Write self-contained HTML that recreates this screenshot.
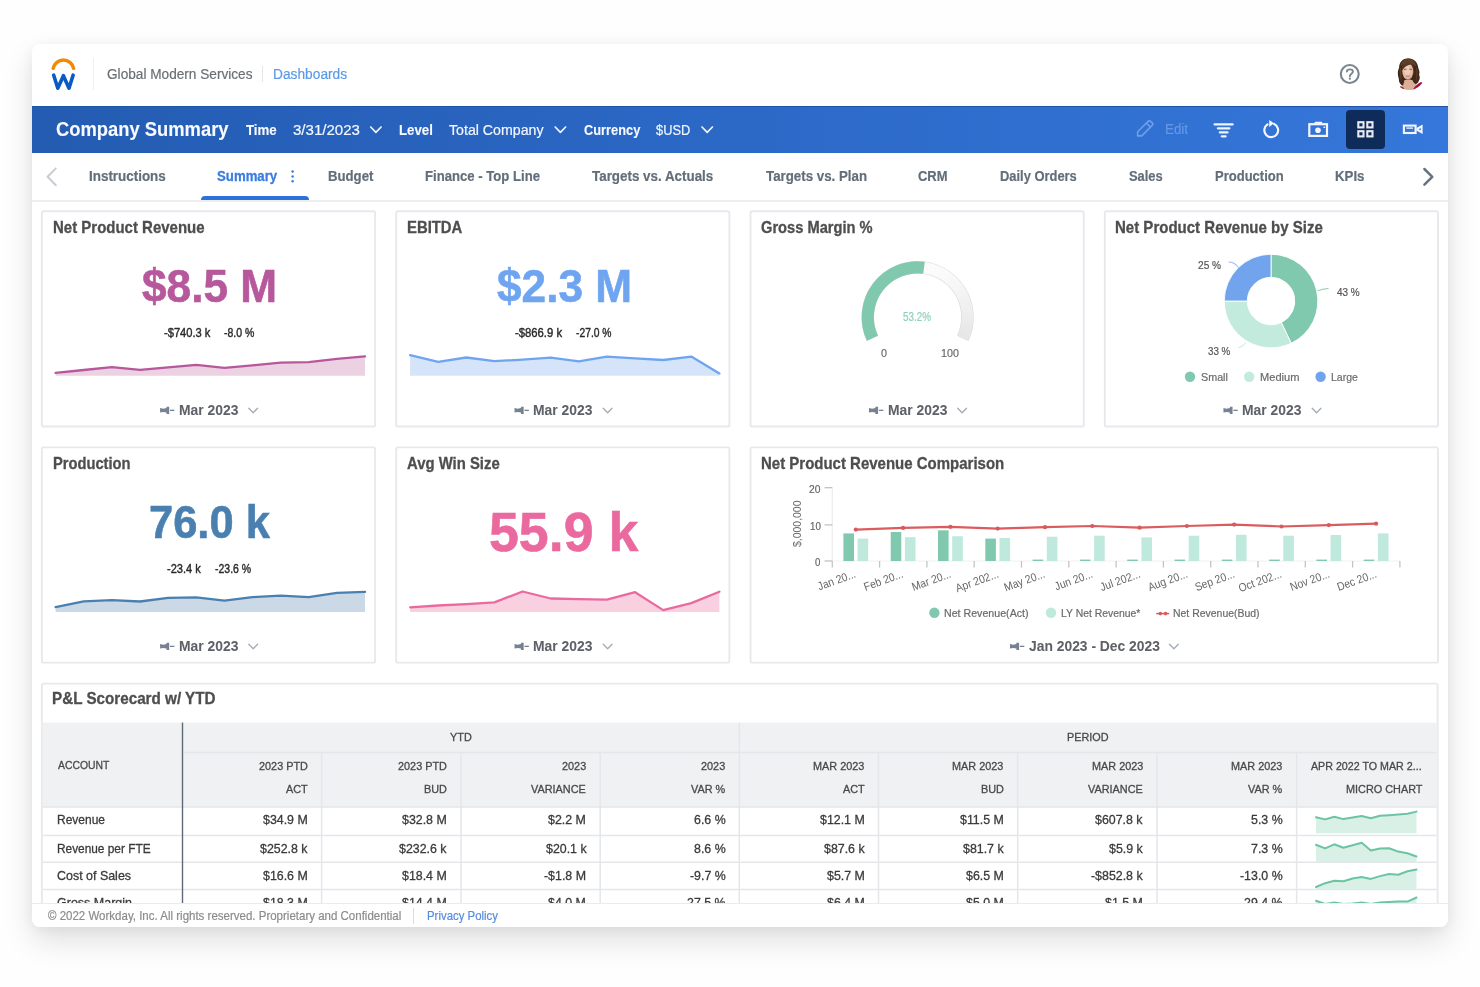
<!DOCTYPE html>
<html><head><meta charset="utf-8"><title>Company Summary</title>
<style>
html,body{margin:0;padding:0;}
body{width:1480px;height:987px;background:#fefefe;position:relative;overflow:hidden;font-family:"Liberation Sans",sans-serif;}
#frame{position:absolute;left:32px;top:44px;width:1416px;height:883px;background:#fff;border-radius:8px;box-shadow:0 14px 30px rgba(0,0,0,0.12),0 2px 13px rgba(0,0,0,0.05);overflow:hidden;}
#pg{position:absolute;left:-32px;top:-44px;width:1480px;height:987px;filter:blur(0.6px);}
.t{position:absolute;white-space:nowrap;line-height:1;transform-origin:0 0;display:block;}
.b{position:absolute;box-sizing:border-box;}
svg{position:absolute;left:0;top:0;}
</style></head>
<body>
<div id="frame"><div id="pg">
<div class="b" style="left:93px;top:58px;width:1px;height:32px;background:#eef0f2;"></div>
<div class="b" style="left:262px;top:66px;width:1px;height:16px;background:#e4e6ea;"></div>
<div class="b" style="left:1392.5px;top:57.9px;width:32.2px;height:32.2px;border-radius:50%;overflow:hidden;"><svg width="32.2" height="32.2" viewBox="1392.5 57.9 32.2 32.2" style="position:absolute;left:0;top:0;">
<path d="M1407.4 58.2 C1402.4 58.2 1398.6 62.4 1398.6 67.4 C1398 69.4 1397 71.4 1397.4 73.6 C1397.2 76 1398.4 77.6 1398.4 79.4 C1398.2 81.6 1399.4 83.6 1400.8 84.8 L1403.2 86.4 L1413.4 84.6 C1416.4 84.4 1418 82.6 1418.4 80.4 C1419.6 78.6 1419.4 76.4 1418.6 74.6 C1419.6 72 1418.4 70 1417.8 68 C1417.4 62.6 1413.6 58.2 1407.4 58.2 Z" fill="#3f2818"/>
<path d="M1407.6 58.6 C1403.4 58.8 1400.4 62 1400 66.4 C1402.6 62.6 1411 61.4 1416 66.6 C1415.4 62 1412.4 58.6 1407.6 58.6 Z" fill="#5f4027"/>
<path d="M1399.4 68 C1398.6 72 1399.6 78 1400.8 82 C1401.2 78 1400.6 72 1400.8 68 Z" fill="#5c3d25"/>
<path d="M1416.6 68 C1417.6 72 1417.2 78 1415.6 82 C1415.6 78 1416.2 72 1415.4 68 Z" fill="#5c3d25"/>
<path d="M1403.8 80.2 C1405.6 79 1410.4 79 1412 80.2 C1413 83 1415 84.6 1418.4 85.4 L1421 90.5 L1399.6 92 L1400.6 87.4 C1402.4 86 1403.6 83.4 1403.8 80.2 Z" fill="#dcae97"/>
<path d="M1411.8 90.6 C1413.4 87 1416 84.4 1420.4 81.8 L1425 84 L1421 93 Z" fill="#a3134b"/>
<path d="M1400.2 86 L1403.6 87.9 L1402.6 90.6 L1398 89.4 Z" fill="#a3134b"/>
<ellipse cx="1407.3" cy="71.2" rx="5.6" ry="8.3" fill="#d9ab95"/>
<ellipse cx="1407.1" cy="70.8" rx="4.7" ry="7.3" fill="#e6bca7"/>
<ellipse cx="1406.8" cy="70.2" rx="3" ry="4.6" fill="#efccba"/>
<path d="M1401.4 68.6 C1401.4 63.4 1406.6 60.6 1412.6 64.4 C1409.4 64.2 1404.4 65.2 1402.2 70.2 Z" fill="#583a24"/>
<path d="M1412.2 64 C1413.6 66 1413.8 69 1413.2 72 C1412.6 69 1412.4 66 1411 64.4 Z" fill="#583a24"/>
<path d="M1403.6 69.3 L1406 69.1 M1408.8 69.1 L1411.2 69.3" stroke="#6b4a3c" stroke-width="0.9" fill="none"/>
<path d="M1405.4 75.6 C1406.6 76.3 1408.2 76.3 1409.4 75.6" stroke="#c47f82" stroke-width="1.1" fill="none"/>
</svg></div>
<div class="b" style="left:32px;top:106px;width:1416px;height:47px;background:linear-gradient(90deg,#245cb2 0%,#2964c0 35%,#2f6dcd 65%,#3577da 100%);border-top:1px solid #1f54a8;"></div>
<div class="b" style="left:1346px;top:110px;width:39px;height:39px;background:#0f2b59;border-radius:4px;"></div>
<div class="b" style="left:32px;top:200px;width:1416px;height:2px;background:#eceef1;"></div>
<div class="b" style="left:200.5px;top:196px;width:108.3px;height:4.2px;background:#2e70d9;border-radius:4px 4px 0 0;"></div>
<svg width="1480" height="987" viewBox="0 0 1480 987">
<path d="M53.2 68.3 A10.45 10.45 0 0 1 73.6 68.3" fill="none" stroke="#f38b00" stroke-width="3.5" stroke-linecap="round"/>
<path d="M53.7 75.2 L57.8 88.2 L63.4 75.7 L69 88.2 L73.1 75.2" fill="none" stroke="#0a5ac6" stroke-width="3.6" stroke-linecap="round" stroke-linejoin="round"/>
<circle cx="1349.75" cy="74" r="8.95" fill="none" stroke="#7b8591" stroke-width="2.1"/>
<path d="M1346.9 71.6 C1346.9 68.6 1352.9 68.6 1352.9 71.6 C1352.9 73.8 1349.9 73.9 1349.9 76.3" fill="none" stroke="#7b8591" stroke-width="1.9" stroke-linecap="round"/>
<circle cx="1349.9" cy="78.7" r="1.15" fill="#7b8591"/>
<path d="M370.7 127 L375.9 132.4 L381.09999999999997 127" fill="none" stroke="#eef3fc" stroke-width="1.7" stroke-linecap="round" stroke-linejoin="round"/>
<path d="M555.1999999999999 127 L560.4 132.4 L565.6 127" fill="none" stroke="#eef3fc" stroke-width="1.7" stroke-linecap="round" stroke-linejoin="round"/>
<path d="M702.0 127 L707.2 132.4 L712.4000000000001 127" fill="none" stroke="#eef3fc" stroke-width="1.7" stroke-linecap="round" stroke-linejoin="round"/>
<g transform="translate(1144.3 129.2) rotate(-45)" fill="none" stroke="#6c9fe8" stroke-width="1.6" stroke-linejoin="round"><path d="M-9.5 0 L-6.5 -2.9 L8.6 -2.9 Q10 -2.9 10 -1.5 L10 1.5 Q10 2.9 8.6 2.9 L-6.5 2.9 Z"/><path d="M5.8 -2.9 L5.8 2.9"/></g>
<path d="M1214.6 124.4 L1232.6 124.4" stroke="#eef3fc" stroke-width="2.3" stroke-linecap="round"/>
<path d="M1217.9 128.3 L1229.4 128.3" stroke="#eef3fc" stroke-width="2.3" stroke-linecap="round"/>
<path d="M1219.9 132.4 L1227.5 132.4" stroke="#eef3fc" stroke-width="2.3" stroke-linecap="round"/>
<path d="M1221.8 136.3 L1225.6 136.3" stroke="#eef3fc" stroke-width="2.3" stroke-linecap="round"/>
<path d="M1274.2 124 A6.9 6.9 0 1 1 1267.5 124.4" fill="none" stroke="#f3f6fd" stroke-width="2.2" stroke-linecap="round"/>
<path d="M1269.2 119.9 L1274 123.3 L1269.2 127 Z" fill="#f3f6fd"/>
<rect x="1309.3" y="124.2" width="17.7" height="11.7" fill="none" stroke="#f3f6fd" stroke-width="2.2"/>
<path d="M1313.9 123.4 L1315.2 121.7 L1321.6 121.7 L1322.9 123.4 Z" fill="#f3f6fd"/>
<circle cx="1318" cy="130.2" r="2.8" fill="#f3f6fd"/>
<rect x="1323.5" y="126.6" width="1.6" height="1.4" fill="#f3f6fd"/>
<rect x="1358.3" y="122.2" width="5.2" height="5.2" fill="none" stroke="#e8ebf1" stroke-width="2.1"/>
<rect x="1358.3" y="131.2" width="5.2" height="5.2" fill="none" stroke="#e8ebf1" stroke-width="2.1"/>
<rect x="1367.3" y="122.2" width="5.2" height="5.2" fill="none" stroke="#e8ebf1" stroke-width="2.1"/>
<rect x="1367.3" y="131.2" width="5.2" height="5.2" fill="none" stroke="#e8ebf1" stroke-width="2.1"/>
<rect x="1403.9" y="125.6" width="11.7" height="7.4" fill="none" stroke="#f3f6fd" stroke-width="2.1"/>
<path d="M1406.4 128.1 L1413 128.1" stroke="#f3f6fd" stroke-width="1.3"/>
<path d="M1416.4 128 L1422.6 124.6 L1422.6 134 L1416.4 130.6 Z" fill="#f3f6fd"/>
<path d="M1418.6 129.3 L1420.8 128 L1420.8 130.6 Z" fill="#3274d6"/>
<circle cx="292.6" cy="171.6" r="1.25" fill="#3b7ddf"/>
<circle cx="292.6" cy="176.4" r="1.25" fill="#3b7ddf"/>
<circle cx="292.6" cy="181.2" r="1.25" fill="#3b7ddf"/>
<path d="M55.8 168.4 L47.6 176.8 L55.8 185.2" fill="none" stroke="#c9cdd3" stroke-width="2" stroke-linecap="round" stroke-linejoin="round"/>
<path d="M1424.4 169 L1432.3 176.8 L1424.4 184.6" fill="none" stroke="#68727e" stroke-width="2.5" stroke-linecap="round" stroke-linejoin="round"/>
<rect x="41.90" y="211.30" width="333.20" height="215.20" rx="1.6" fill="#fff" stroke="#e7e9ed" stroke-width="1.9"/>
<rect x="396.20" y="211.30" width="333.20" height="215.20" rx="1.6" fill="#fff" stroke="#e7e9ed" stroke-width="1.9"/>
<rect x="750.50" y="211.30" width="333.20" height="215.20" rx="1.6" fill="#fff" stroke="#e7e9ed" stroke-width="1.9"/>
<rect x="1104.80" y="211.30" width="333.20" height="215.20" rx="1.6" fill="#fff" stroke="#e7e9ed" stroke-width="1.9"/>
<rect x="41.90" y="447.40" width="333.20" height="215.20" rx="1.6" fill="#fff" stroke="#e7e9ed" stroke-width="1.9"/>
<rect x="396.20" y="447.40" width="333.20" height="215.20" rx="1.6" fill="#fff" stroke="#e7e9ed" stroke-width="1.9"/>
<rect x="750.50" y="447.40" width="687.50" height="215.20" rx="1.6" fill="#fff" stroke="#e7e9ed" stroke-width="1.9"/>
<rect x="41.90" y="683.60" width="1395.70" height="262.00" rx="1.6" fill="#fff" stroke="#e7e9ed" stroke-width="1.9"/>
<polygon points="55.6,375.8 55.6,372.9 83.7,370.0 111.9,367.2 140.0,369.9 168.1,367.4 196.2,364.9 224.4,367.9 252.5,365.3 280.6,362.6 308.7,362.1 336.9,358.9 365.0,356.4 365.0,375.8" fill="#ecd1e3"/>
<polyline points="55.6,372.9 83.7,370.0 111.9,367.2 140.0,369.9 168.1,367.4 196.2,364.9 224.4,367.9 252.5,365.3 280.6,362.6 308.7,362.1 336.9,358.9 365.0,356.4" fill="none" stroke="#b6589b" stroke-width="2.3" stroke-linejoin="round" stroke-linecap="round"/>
<path d="M160.1 408.1 L163.29999999999998 408.7 L166.5 408.1 L166.5 406.8 L169.2 406.8 L169.2 413.90000000000003 L166.5 413.90000000000003 L166.5 412.6 L163.29999999999998 412.0 L160.1 412.6 Z" fill="#768292"/>
<path d="M170.0 410.35 L174.4 410.35" stroke="#768292" stroke-width="1.3"/>
<path d="M248.79999999999998 408.2 L253.2 412.8 L257.59999999999997 408.2" fill="none" stroke="#a3abb7" stroke-width="1.3" stroke-linecap="round" stroke-linejoin="round"/>
<polygon points="410.1,375.8 410.1,355.2 438.2,361.9 466.3,357.5 494.4,361.2 522.6,359.6 550.7,357.7 578.8,361.4 606.9,356.6 635.1,358.4 663.2,360.0 691.3,356.6 719.4,373.4 719.4,375.8" fill="#d6e4fa"/>
<polyline points="410.1,355.2 438.2,361.9 466.3,357.5 494.4,361.2 522.6,359.6 550.7,357.7 578.8,361.4 606.9,356.6 635.1,358.4 663.2,360.0 691.3,356.6 719.4,373.4" fill="none" stroke="#6fa5f0" stroke-width="2.3" stroke-linejoin="round" stroke-linecap="round"/>
<path d="M514.55 408.1 L517.75 408.7 L520.9499999999999 408.1 L520.9499999999999 406.8 L523.65 406.8 L523.65 413.90000000000003 L520.9499999999999 413.90000000000003 L520.9499999999999 412.6 L517.75 412.0 L514.55 412.6 Z" fill="#768292"/>
<path d="M524.4499999999999 410.35 L528.8499999999999 410.35" stroke="#768292" stroke-width="1.3"/>
<path d="M603.25 408.2 L607.65 412.8 L612.05 408.2" fill="none" stroke="#a3abb7" stroke-width="1.3" stroke-linecap="round" stroke-linejoin="round"/>
<path d="M872.42 338.27 A49.85 49.85 0 1 1 962.78 338.27" fill="none" stroke="#dadada" stroke-width="12.5"/>
<path d="M872.27 337.95 A49.85 49.85 0 0 1 870.47 333.44" fill="none" stroke="rgb(231,231,231)" stroke-width="11.3"/>
<path d="M870.64 333.94 A49.85 49.85 0 0 1 869.24 329.29" fill="none" stroke="rgb(232,232,232)" stroke-width="11.3"/>
<path d="M869.37 329.79 A49.85 49.85 0 0 1 868.37 325.04" fill="none" stroke="rgb(233,233,233)" stroke-width="11.3"/>
<path d="M868.46 325.56 A49.85 49.85 0 0 1 867.88 320.74" fill="none" stroke="rgb(235,235,235)" stroke-width="11.3"/>
<path d="M867.92 321.26 A49.85 49.85 0 0 1 867.76 316.41" fill="none" stroke="rgb(236,236,236)" stroke-width="11.3"/>
<path d="M867.75 316.93 A49.85 49.85 0 0 1 868.01 312.08" fill="none" stroke="rgb(237,237,237)" stroke-width="11.3"/>
<path d="M867.96 312.60 A49.85 49.85 0 0 1 868.65 307.79" fill="none" stroke="rgb(239,239,239)" stroke-width="11.3"/>
<path d="M868.55 308.31 A49.85 49.85 0 0 1 869.65 303.58" fill="none" stroke="rgb(240,240,240)" stroke-width="11.3"/>
<path d="M869.51 304.08 A49.85 49.85 0 0 1 871.01 299.46" fill="none" stroke="rgb(241,241,241)" stroke-width="11.3"/>
<path d="M870.83 299.95 A49.85 49.85 0 0 1 872.73 295.48" fill="none" stroke="rgb(243,243,243)" stroke-width="11.3"/>
<path d="M872.50 295.95 A49.85 49.85 0 0 1 874.78 291.67" fill="none" stroke="rgb(244,244,244)" stroke-width="11.3"/>
<path d="M874.52 292.12 A49.85 49.85 0 0 1 877.16 288.05" fill="none" stroke="rgb(245,245,245)" stroke-width="11.3"/>
<path d="M876.86 288.47 A49.85 49.85 0 0 1 879.85 284.64" fill="none" stroke="rgb(246,246,246)" stroke-width="11.3"/>
<path d="M879.51 285.04 A49.85 49.85 0 0 1 882.82 281.49" fill="none" stroke="rgb(247,247,247)" stroke-width="11.3"/>
<path d="M882.45 281.85 A49.85 49.85 0 0 1 886.05 278.60" fill="none" stroke="rgb(248,248,248)" stroke-width="11.3"/>
<path d="M885.65 278.93 A49.85 49.85 0 0 1 889.52 276.01" fill="none" stroke="rgb(249,249,249)" stroke-width="11.3"/>
<path d="M889.09 276.30 A49.85 49.85 0 0 1 893.21 273.73" fill="none" stroke="rgb(250,250,250)" stroke-width="11.3"/>
<path d="M892.75 273.98 A49.85 49.85 0 0 1 897.08 271.77" fill="none" stroke="rgb(250,250,250)" stroke-width="11.3"/>
<path d="M896.60 271.99 A49.85 49.85 0 0 1 901.10 270.16" fill="none" stroke="rgb(251,251,251)" stroke-width="11.3"/>
<path d="M900.61 270.34 A49.85 49.85 0 0 1 905.25 268.90" fill="none" stroke="rgb(251,251,251)" stroke-width="11.3"/>
<path d="M904.74 269.04 A49.85 49.85 0 0 1 909.49 268.01" fill="none" stroke="rgb(252,252,252)" stroke-width="11.3"/>
<path d="M908.97 268.10 A49.85 49.85 0 0 1 913.79 267.50" fill="none" stroke="rgb(252,252,252)" stroke-width="11.3"/>
<path d="M913.27 267.54 A49.85 49.85 0 0 1 918.12 267.35" fill="none" stroke="rgb(252,252,252)" stroke-width="11.3"/>
<path d="M917.60 267.35 A49.85 49.85 0 0 1 922.45 267.59" fill="none" stroke="rgb(252,252,252)" stroke-width="11.3"/>
<path d="M921.93 267.54 A49.85 49.85 0 0 1 926.74 268.20" fill="none" stroke="rgb(252,252,252)" stroke-width="11.3"/>
<path d="M926.23 268.10 A49.85 49.85 0 0 1 930.96 269.17" fill="none" stroke="rgb(252,252,252)" stroke-width="11.3"/>
<path d="M930.46 269.04 A49.85 49.85 0 0 1 935.08 270.52" fill="none" stroke="rgb(251,251,251)" stroke-width="11.3"/>
<path d="M934.59 270.34 A49.85 49.85 0 0 1 939.07 272.21" fill="none" stroke="rgb(251,251,251)" stroke-width="11.3"/>
<path d="M938.60 271.99 A49.85 49.85 0 0 1 942.90 274.25" fill="none" stroke="rgb(250,250,250)" stroke-width="11.3"/>
<path d="M942.45 273.98 A49.85 49.85 0 0 1 946.53 276.61" fill="none" stroke="rgb(250,250,250)" stroke-width="11.3"/>
<path d="M946.11 276.30 A49.85 49.85 0 0 1 949.95 279.27" fill="none" stroke="rgb(249,249,249)" stroke-width="11.3"/>
<path d="M949.55 278.93 A49.85 49.85 0 0 1 953.12 282.22" fill="none" stroke="rgb(248,248,248)" stroke-width="11.3"/>
<path d="M952.75 281.85 A49.85 49.85 0 0 1 956.02 285.44" fill="none" stroke="rgb(247,247,247)" stroke-width="11.3"/>
<path d="M955.69 285.04 A49.85 49.85 0 0 1 958.64 288.90" fill="none" stroke="rgb(246,246,246)" stroke-width="11.3"/>
<path d="M958.34 288.47 A49.85 49.85 0 0 1 960.94 292.57" fill="none" stroke="rgb(245,245,245)" stroke-width="11.3"/>
<path d="M960.68 292.12 A49.85 49.85 0 0 1 962.92 296.43" fill="none" stroke="rgb(244,244,244)" stroke-width="11.3"/>
<path d="M962.70 295.95 A49.85 49.85 0 0 1 964.55 300.44" fill="none" stroke="rgb(242,242,242)" stroke-width="11.3"/>
<path d="M964.37 299.95 A49.85 49.85 0 0 1 965.83 304.58" fill="none" stroke="rgb(241,241,241)" stroke-width="11.3"/>
<path d="M965.69 304.08 A49.85 49.85 0 0 1 966.74 308.82" fill="none" stroke="rgb(240,240,240)" stroke-width="11.3"/>
<path d="M966.65 308.31 A49.85 49.85 0 0 1 967.28 313.12" fill="none" stroke="rgb(239,239,239)" stroke-width="11.3"/>
<path d="M967.24 312.60 A49.85 49.85 0 0 1 967.45 317.45" fill="none" stroke="rgb(237,237,237)" stroke-width="11.3"/>
<path d="M967.45 316.93 A49.85 49.85 0 0 1 967.24 321.78" fill="none" stroke="rgb(236,236,236)" stroke-width="11.3"/>
<path d="M967.28 321.26 A49.85 49.85 0 0 1 966.65 326.07" fill="none" stroke="rgb(235,235,235)" stroke-width="11.3"/>
<path d="M966.74 325.56 A49.85 49.85 0 0 1 965.70 330.30" fill="none" stroke="rgb(233,233,233)" stroke-width="11.3"/>
<path d="M965.83 329.79 A49.85 49.85 0 0 1 964.38 334.43" fill="none" stroke="rgb(232,232,232)" stroke-width="11.3"/>
<path d="M964.56 333.94 A49.85 49.85 0 0 1 962.93 337.95" fill="none" stroke="rgb(231,231,231)" stroke-width="11.3"/>
<path d="M872.42 338.27 A49.85 49.85 0 0 1 923.99 267.76" fill="none" stroke="#80c9ae" stroke-width="12.200000000000001"/>
<path d="M869.0 408.1 L872.2 408.7 L875.4 408.1 L875.4 406.8 L878.1 406.8 L878.1 413.90000000000003 L875.4 413.90000000000003 L875.4 412.6 L872.2 412.0 L869.0 412.6 Z" fill="#768292"/>
<path d="M878.9 410.35 L883.3 410.35" stroke="#768292" stroke-width="1.3"/>
<path d="M957.6999999999999 408.2 L962.0999999999999 412.8 L966.4999999999999 408.2" fill="none" stroke="#a3abb7" stroke-width="1.3" stroke-linecap="round" stroke-linejoin="round"/>
<path d="M1271.05 254.25 A46.8 46.8 0 0 1 1291.20 343.29 L1281.27 322.49 A23.75 23.75 0 0 0 1271.05 277.30 Z" fill="#80c9ae" stroke="#fff" stroke-width="0.9"/>
<path d="M1291.20 343.29 A46.8 46.8 0 0 1 1224.25 301.05 L1247.30 301.05 A23.75 23.75 0 0 0 1281.27 322.49 Z" fill="#c2eadd" stroke="#fff" stroke-width="0.9"/>
<path d="M1224.25 301.05 A46.8 46.8 0 0 1 1271.05 254.25 L1271.05 277.30 A23.75 23.75 0 0 0 1247.30 301.05 Z" fill="#72a4ee" stroke="#fff" stroke-width="0.9"/>
<path d="M1228.6 261.9 Q1234.5 262 1238.6 267.8" fill="none" stroke="#a9c8f4" stroke-width="1.1"/>
<path d="M1317.6 290.8 Q1322 289 1328.6 288.4" fill="none" stroke="#9ad5be" stroke-width="1.1"/>
<path d="M1238.2 348 Q1243 346.5 1245.9 342" fill="none" stroke="#cdeee3" stroke-width="1.1"/>
<circle cx="1190" cy="376.7" r="5.2" fill="#80c9ae"/>
<circle cx="1249.2" cy="376.7" r="5.2" fill="#c2eadd"/>
<circle cx="1320.6" cy="376.7" r="5.2" fill="#72a4ee"/>
<path d="M1223.4499999999998 408.1 L1226.6499999999999 408.7 L1229.85 408.1 L1229.85 406.8 L1232.5499999999997 406.8 L1232.5499999999997 413.90000000000003 L1229.85 413.90000000000003 L1229.85 412.6 L1226.6499999999999 412.0 L1223.4499999999998 412.6 Z" fill="#768292"/>
<path d="M1233.35 410.35 L1237.7499999999998 410.35" stroke="#768292" stroke-width="1.3"/>
<path d="M1312.1499999999999 408.2 L1316.55 412.8 L1320.95 408.2" fill="none" stroke="#a3abb7" stroke-width="1.3" stroke-linecap="round" stroke-linejoin="round"/>
<polygon points="55.6,611.9 55.6,607.1 83.7,601.3 111.9,600.1 140.0,601.5 168.1,597.8 196.2,597.3 224.4,600.6 252.5,597.1 280.6,595.7 308.7,597.1 336.9,592.9 365.0,591.9 365.0,611.9" fill="#cbd9e7"/>
<polyline points="55.6,607.1 83.7,601.3 111.9,600.1 140.0,601.5 168.1,597.8 196.2,597.3 224.4,600.6 252.5,597.1 280.6,595.7 308.7,597.1 336.9,592.9 365.0,591.9" fill="none" stroke="#4a80b0" stroke-width="2.3" stroke-linejoin="round" stroke-linecap="round"/>
<path d="M160.1 644.0999999999999 L163.29999999999998 644.6999999999999 L166.5 644.0999999999999 L166.5 642.8 L169.2 642.8 L169.2 649.9 L166.5 649.9 L166.5 648.5999999999999 L163.29999999999998 648.0 L160.1 648.5999999999999 Z" fill="#768292"/>
<path d="M170.0 646.3499999999999 L174.4 646.3499999999999" stroke="#768292" stroke-width="1.3"/>
<path d="M248.79999999999998 644.2 L253.2 648.8 L257.59999999999997 644.2" fill="none" stroke="#a3abb7" stroke-width="1.3" stroke-linecap="round" stroke-linejoin="round"/>
<polygon points="410.1,611.9 410.1,607.3 438.2,605.5 466.3,604.1 494.4,602.4 522.6,591.5 550.7,598.5 578.8,599.2 606.9,599.6 635.1,592.2 663.2,610.1 691.3,603.1 719.4,591.7 719.4,611.9" fill="#f8d0e0"/>
<polyline points="410.1,607.3 438.2,605.5 466.3,604.1 494.4,602.4 522.6,591.5 550.7,598.5 578.8,599.2 606.9,599.6 635.1,592.2 663.2,610.1 691.3,603.1 719.4,591.7" fill="none" stroke="#ea6a9f" stroke-width="2.3" stroke-linejoin="round" stroke-linecap="round"/>
<path d="M514.55 644.0999999999999 L517.75 644.6999999999999 L520.9499999999999 644.0999999999999 L520.9499999999999 642.8 L523.65 642.8 L523.65 649.9 L520.9499999999999 649.9 L520.9499999999999 648.5999999999999 L517.75 648.0 L514.55 648.5999999999999 Z" fill="#768292"/>
<path d="M524.4499999999999 646.3499999999999 L528.8499999999999 646.3499999999999" stroke="#768292" stroke-width="1.3"/>
<path d="M603.25 644.2 L607.65 648.8 L612.05 644.2" fill="none" stroke="#a3abb7" stroke-width="1.3" stroke-linecap="round" stroke-linejoin="round"/>
<path d="M832.3 487.7 L832.3 561.0" stroke="#ececec" stroke-width="1.2"/>
<path d="M832.3 561.0 L1399.8999999999999 561.0" stroke="#f1f1f1" stroke-width="1.2"/>
<path d="M824.6 487.7 L832.3 487.7" stroke="#bdbdbd" stroke-width="1.2"/>
<path d="M824.6 524.9 L832.3 524.9" stroke="#bdbdbd" stroke-width="1.2"/>
<path d="M824.6 561.0 L832.3 561.0" stroke="#bdbdbd" stroke-width="1.2"/>
<path d="M832.3 561.0 L832.3 567.6" stroke="#c4c4c4" stroke-width="1.3"/>
<path d="M879.6 561.0 L879.6 567.6" stroke="#c4c4c4" stroke-width="1.3"/>
<path d="M926.9 561.0 L926.9 567.6" stroke="#c4c4c4" stroke-width="1.3"/>
<path d="M974.2 561.0 L974.2 567.6" stroke="#c4c4c4" stroke-width="1.3"/>
<path d="M1021.5 561.0 L1021.5 567.6" stroke="#c4c4c4" stroke-width="1.3"/>
<path d="M1068.8 561.0 L1068.8 567.6" stroke="#c4c4c4" stroke-width="1.3"/>
<path d="M1116.1 561.0 L1116.1 567.6" stroke="#c4c4c4" stroke-width="1.3"/>
<path d="M1163.4 561.0 L1163.4 567.6" stroke="#c4c4c4" stroke-width="1.3"/>
<path d="M1210.7 561.0 L1210.7 567.6" stroke="#c4c4c4" stroke-width="1.3"/>
<path d="M1258.0 561.0 L1258.0 567.6" stroke="#c4c4c4" stroke-width="1.3"/>
<path d="M1305.3 561.0 L1305.3 567.6" stroke="#c4c4c4" stroke-width="1.3"/>
<path d="M1352.6 561.0 L1352.6 567.6" stroke="#c4c4c4" stroke-width="1.3"/>
<path d="M1399.9 561.0 L1399.9 567.6" stroke="#c4c4c4" stroke-width="1.3"/>
<rect x="843.4" y="533.4" width="10.6" height="27.6" fill="#80c9ae"/>
<rect x="857.6" y="538.6" width="10.6" height="22.4" fill="#bfe9dc"/>
<rect x="890.7" y="532.0" width="10.6" height="29.0" fill="#80c9ae"/>
<rect x="904.9" y="537.2" width="10.6" height="23.8" fill="#bfe9dc"/>
<rect x="938.0" y="530.3" width="10.6" height="30.7" fill="#80c9ae"/>
<rect x="952.2" y="536.2" width="10.6" height="24.8" fill="#bfe9dc"/>
<rect x="985.3" y="538.6" width="10.6" height="22.4" fill="#80c9ae"/>
<rect x="999.5" y="537.9" width="10.6" height="23.1" fill="#bfe9dc"/>
<rect x="1032.6" y="559.6" width="10.6" height="1.4" fill="#80c9ae"/>
<rect x="1046.8" y="536.7" width="10.6" height="24.3" fill="#bfe9dc"/>
<rect x="1079.9" y="559.6" width="10.6" height="1.4" fill="#80c9ae"/>
<rect x="1094.1" y="535.7" width="10.6" height="25.3" fill="#bfe9dc"/>
<rect x="1127.2" y="559.6" width="10.6" height="1.4" fill="#80c9ae"/>
<rect x="1141.4" y="537.4" width="10.6" height="23.6" fill="#bfe9dc"/>
<rect x="1174.5" y="559.6" width="10.6" height="1.4" fill="#80c9ae"/>
<rect x="1188.7" y="535.7" width="10.6" height="25.3" fill="#bfe9dc"/>
<rect x="1221.8" y="559.6" width="10.6" height="1.4" fill="#80c9ae"/>
<rect x="1236.0" y="534.8" width="10.6" height="26.2" fill="#bfe9dc"/>
<rect x="1269.1" y="559.6" width="10.6" height="1.4" fill="#80c9ae"/>
<rect x="1283.3" y="535.7" width="10.6" height="25.3" fill="#bfe9dc"/>
<rect x="1316.4" y="559.6" width="10.6" height="1.4" fill="#80c9ae"/>
<rect x="1330.6" y="535.0" width="10.6" height="26.0" fill="#bfe9dc"/>
<rect x="1363.7" y="559.6" width="10.6" height="1.4" fill="#80c9ae"/>
<rect x="1377.9" y="533.4" width="10.6" height="27.6" fill="#bfe9dc"/>
<polyline points="855.8,529.6 903.1,527.9 950.4,526.8 997.7,528.6 1045.0,527.2 1092.3,526.0 1139.6,527.7 1186.9,526.0 1234.2,524.6 1281.5,526.5 1328.8,525.1 1376.1,523.7" fill="none" stroke="#da5c5f" stroke-width="2.2" stroke-linejoin="round"/>
<circle cx="855.8" cy="529.6" r="2.1" fill="#d9595c"/>
<circle cx="903.1" cy="527.9" r="2.1" fill="#d9595c"/>
<circle cx="950.4" cy="526.8" r="2.1" fill="#d9595c"/>
<circle cx="997.7" cy="528.6" r="2.1" fill="#d9595c"/>
<circle cx="1045.0" cy="527.2" r="2.1" fill="#d9595c"/>
<circle cx="1092.3" cy="526.0" r="2.1" fill="#d9595c"/>
<circle cx="1139.6" cy="527.7" r="2.1" fill="#d9595c"/>
<circle cx="1186.9" cy="526.0" r="2.1" fill="#d9595c"/>
<circle cx="1234.2" cy="524.6" r="2.1" fill="#d9595c"/>
<circle cx="1281.5" cy="526.5" r="2.1" fill="#d9595c"/>
<circle cx="1328.8" cy="525.1" r="2.1" fill="#d9595c"/>
<circle cx="1376.1" cy="523.7" r="2.1" fill="#d9595c"/>
<circle cx="934.4" cy="612.7" r="5.2" fill="#80c9ae"/>
<circle cx="1051" cy="612.7" r="5.2" fill="#bfe9dc"/>
<path d="M1156.2 613.6 L1169.2 613.6" stroke="#d9595c" stroke-width="1.5"/>
<circle cx="1160.3" cy="613.6" r="1.8" fill="#d9595c"/><circle cx="1165.6" cy="613.6" r="1.8" fill="#d9595c"/>
<path d="M1010 644.0999999999999 L1013.2 644.6999999999999 L1016.4 644.0999999999999 L1016.4 642.8 L1019.1 642.8 L1019.1 649.9 L1016.4 649.9 L1016.4 648.5999999999999 L1013.2 648.0 L1010 648.5999999999999 Z" fill="#768292"/>
<path d="M1019.9 646.3499999999999 L1024.3 646.3499999999999" stroke="#768292" stroke-width="1.3"/>
<path d="M1169.5 644.2 L1173.9 648.8 L1178.3000000000002 644.2" fill="none" stroke="#a3abb7" stroke-width="1.3" stroke-linecap="round" stroke-linejoin="round"/>
<rect x="42.9" y="722.6" width="1393.6999999999998" height="84.4" fill="#f0f1f3"/>
<path d="M183 752.5 L1436.6 752.5" stroke="#e4e6ea" stroke-width="1.5"/>
<path d="M321.6 752 L321.6 930" stroke="#e4e6ea" stroke-width="1.5"/>
<path d="M461.0 752 L461.0 930" stroke="#e4e6ea" stroke-width="1.5"/>
<path d="M600.2 752 L600.2 930" stroke="#e4e6ea" stroke-width="1.5"/>
<path d="M739.3 722.6 L739.3 930" stroke="#e4e6ea" stroke-width="1.5"/>
<path d="M878.5 752 L878.5 930" stroke="#e4e6ea" stroke-width="1.5"/>
<path d="M1017.7 752 L1017.7 930" stroke="#e4e6ea" stroke-width="1.5"/>
<path d="M1157.0 752 L1157.0 930" stroke="#e4e6ea" stroke-width="1.5"/>
<path d="M1296.6 752 L1296.6 930" stroke="#e4e6ea" stroke-width="1.5"/>
<path d="M42.9 807.0 L1436.6 807.0" stroke="#e4e6ea" stroke-width="1.5"/>
<path d="M42.9 835.4 L1436.6 835.4" stroke="#e4e6ea" stroke-width="1.5"/>
<path d="M42.9 862.3 L1436.6 862.3" stroke="#e4e6ea" stroke-width="1.5"/>
<path d="M42.9 889.6 L1436.6 889.6" stroke="#e4e6ea" stroke-width="1.5"/>
<path d="M182.5 722.6 L182.5 930" stroke="#5f687a" stroke-width="1.4"/>
<polygon points="1316.0,833.2 1316.0,817.3 1325.1,819.4 1334.3,816.8 1343.4,819.1 1352.5,817.6 1361.7,816 1370.8,818.2 1380.0,815.8 1389.1,815.2 1398.2,814.5 1407.4,813.7 1416.5,811.6 1416.5,833.2" fill="#d9f0e7"/>
<polyline points="1316.0,817.3 1325.1,819.4 1334.3,816.8 1343.4,819.1 1352.5,817.6 1361.7,816 1370.8,818.2 1380.0,815.8 1389.1,815.2 1398.2,814.5 1407.4,813.7 1416.5,811.6" fill="none" stroke="#6cc4a4" stroke-width="2" stroke-linejoin="round" stroke-linecap="round"/>
<polygon points="1316.0,861.9 1316.0,844.8 1325.1,848.4 1334.3,844.3 1343.4,847.7 1352.5,845.3 1361.7,842.7 1370.8,850.5 1380.0,848.6 1389.1,848.2 1398.2,851.6 1407.4,853.3 1416.5,856.5 1416.5,861.9" fill="#d9f0e7"/>
<polyline points="1316.0,844.8 1325.1,848.4 1334.3,844.3 1343.4,847.7 1352.5,845.3 1361.7,842.7 1370.8,850.5 1380.0,848.6 1389.1,848.2 1398.2,851.6 1407.4,853.3 1416.5,856.5" fill="none" stroke="#6cc4a4" stroke-width="2" stroke-linejoin="round" stroke-linecap="round"/>
<polygon points="1316.0,888.9 1316.0,887 1325.1,883.2 1334.3,880.7 1343.4,881.3 1352.5,878.5 1361.7,877.1 1370.8,878.9 1380.0,876.1 1389.1,874 1398.2,874.8 1407.4,871.3 1416.5,869.6 1416.5,888.9" fill="#d9f0e7"/>
<polyline points="1316.0,887 1325.1,883.2 1334.3,880.7 1343.4,881.3 1352.5,878.5 1361.7,877.1 1370.8,878.9 1380.0,876.1 1389.1,874 1398.2,874.8 1407.4,871.3 1416.5,869.6" fill="none" stroke="#6cc4a4" stroke-width="2" stroke-linejoin="round" stroke-linecap="round"/>
<polygon points="1316.0,916 1316.0,900.8 1325.1,904 1334.3,902.4 1343.4,904 1352.5,903.4 1361.7,902.4 1370.8,904 1380.0,902.4 1389.1,902.1 1398.2,901.6 1407.4,901.6 1416.5,897.5 1416.5,916" fill="#d9f0e7"/>
<polyline points="1316.0,900.8 1325.1,904 1334.3,902.4 1343.4,904 1352.5,903.4 1361.7,902.4 1370.8,904 1380.0,902.4 1389.1,902.1 1398.2,901.6 1407.4,901.6 1416.5,897.5" fill="none" stroke="#6cc4a4" stroke-width="2" stroke-linejoin="round" stroke-linecap="round"/>
</svg>
<span class="t" style="left:106.50px;top:66.00px;font-size:15.3px;color:#6a6f75;transform:scaleX(0.8914);-webkit-text-stroke:0.2px #6a6f75;">Global Modern Services</span>
<span class="t" style="left:273.40px;top:66.00px;font-size:15.3px;color:#5b9ae6;transform:scaleX(0.8987);-webkit-text-stroke:0.2px #5b9ae6;">Dashboards</span>
<span class="t" style="left:56.25px;top:119.00px;font-size:20.2px;color:#f8faff;transform:scaleX(0.9100);font-weight:bold;-webkit-text-stroke:0.1px #f8faff;">Company Summary</span>
<span class="t" style="left:245.50px;top:123.00px;font-size:14.8px;color:#f8faff;transform:scaleX(0.8974);font-weight:bold;-webkit-text-stroke:0.1px #f8faff;">Time</span>
<span class="t" style="left:292.50px;top:123.00px;font-size:14.8px;color:#f2f6fd;transform:scaleX(1.0175);-webkit-text-stroke:0.2px #f2f6fd;">3/31/2023</span>
<span class="t" style="left:398.60px;top:123.00px;font-size:14.8px;color:#f8faff;transform:scaleX(0.8966);font-weight:bold;-webkit-text-stroke:0.1px #f8faff;">Level</span>
<span class="t" style="left:449.25px;top:123.00px;font-size:14.8px;color:#f2f6fd;transform:scaleX(0.9574);-webkit-text-stroke:0.2px #f2f6fd;">Total Company</span>
<span class="t" style="left:583.75px;top:123.00px;font-size:14.8px;color:#f8faff;transform:scaleX(0.8659);font-weight:bold;-webkit-text-stroke:0.1px #f8faff;">Currency</span>
<span class="t" style="left:656.25px;top:123.00px;font-size:14.8px;color:#f2f6fd;transform:scaleX(0.8666);-webkit-text-stroke:0.2px #f2f6fd;">$USD</span>
<span class="t" style="left:1164.50px;top:122.00px;font-size:14.6px;color:#6397e6;transform:scaleX(0.9173);-webkit-text-stroke:0.2px #6397e6;">Edit</span>
<span class="t" style="left:88.60px;top:169.00px;font-size:14.5px;color:#626e7a;transform:scaleX(0.9251);font-weight:bold;-webkit-text-stroke:0.2px #626e7a;">Instructions</span>
<span class="t" style="left:327.80px;top:169.00px;font-size:14.5px;color:#626e7a;transform:scaleX(0.9089);font-weight:bold;-webkit-text-stroke:0.2px #626e7a;">Budget</span>
<span class="t" style="left:425.00px;top:169.00px;font-size:14.5px;color:#626e7a;transform:scaleX(0.9053);font-weight:bold;-webkit-text-stroke:0.2px #626e7a;">Finance - Top Line</span>
<span class="t" style="left:592.00px;top:169.00px;font-size:14.5px;color:#626e7a;transform:scaleX(0.9230);font-weight:bold;-webkit-text-stroke:0.2px #626e7a;">Targets vs. Actuals</span>
<span class="t" style="left:765.50px;top:169.00px;font-size:14.5px;color:#626e7a;transform:scaleX(0.9171);font-weight:bold;-webkit-text-stroke:0.2px #626e7a;">Targets vs. Plan</span>
<span class="t" style="left:918.00px;top:169.00px;font-size:14.5px;color:#626e7a;transform:scaleX(0.8940);font-weight:bold;-webkit-text-stroke:0.2px #626e7a;">CRM</span>
<span class="t" style="left:1000.00px;top:169.00px;font-size:14.5px;color:#626e7a;transform:scaleX(0.8902);font-weight:bold;-webkit-text-stroke:0.2px #626e7a;">Daily Orders</span>
<span class="t" style="left:1128.75px;top:169.00px;font-size:14.5px;color:#626e7a;transform:scaleX(0.8898);font-weight:bold;-webkit-text-stroke:0.2px #626e7a;">Sales</span>
<span class="t" style="left:1215.00px;top:169.00px;font-size:14.5px;color:#626e7a;transform:scaleX(0.8979);font-weight:bold;-webkit-text-stroke:0.2px #626e7a;">Production</span>
<span class="t" style="left:1334.80px;top:169.00px;font-size:14.5px;color:#626e7a;transform:scaleX(0.9124);font-weight:bold;-webkit-text-stroke:0.2px #626e7a;">KPIs</span>
<span class="t" style="left:216.75px;top:169.00px;font-size:14.5px;color:#3b7ddf;transform:scaleX(0.9111);font-weight:bold;-webkit-text-stroke:0.3px #3b7ddf;">Summary</span>
<span class="t" style="left:53.00px;top:219.00px;font-size:16.2px;color:#4e4e4e;transform:scaleX(0.9258);font-weight:bold;-webkit-text-stroke:0.3px #4e4e4e;">Net Product Revenue</span>
<span class="t" style="left:142.20px;top:263.00px;font-size:46.6px;color:#b6589b;transform:scaleX(0.9484);font-weight:bold;-webkit-text-stroke:0.6px #b6589b;">$8.5 M</span>
<span class="t" style="left:164.00px;top:327.00px;font-size:12.2px;color:#2a2a2a;transform:scaleX(0.9136);-webkit-text-stroke:0.4px #2a2a2a;">-$740.3 k</span>
<span class="t" style="left:223.80px;top:327.00px;font-size:12.2px;color:#2a2a2a;transform:scaleX(0.8600);-webkit-text-stroke:0.4px #2a2a2a;">-8.0 %</span>
<span class="t" style="left:178.90px;top:403.00px;font-size:14.3px;color:#5e6268;transform:scaleX(0.9707);font-weight:bold;-webkit-text-stroke:0.05px #5e6268;">Mar 2023</span>
<span class="t" style="left:407.20px;top:219.00px;font-size:16.2px;color:#4e4e4e;transform:scaleX(0.9182);font-weight:bold;-webkit-text-stroke:0.3px #4e4e4e;">EBITDA</span>
<span class="t" style="left:496.65px;top:263.00px;font-size:46.6px;color:#6fa5f0;transform:scaleX(0.9484);font-weight:bold;-webkit-text-stroke:0.6px #6fa5f0;">$2.3 M</span>
<span class="t" style="left:514.60px;top:327.00px;font-size:12.2px;color:#2a2a2a;transform:scaleX(0.9254);-webkit-text-stroke:0.4px #2a2a2a;">-$866.9 k</span>
<span class="t" style="left:575.50px;top:327.00px;font-size:12.2px;color:#2a2a2a;transform:scaleX(0.8452);-webkit-text-stroke:0.4px #2a2a2a;">-27.0 %</span>
<span class="t" style="left:533.35px;top:403.00px;font-size:14.3px;color:#5e6268;transform:scaleX(0.9707);font-weight:bold;-webkit-text-stroke:0.05px #5e6268;">Mar 2023</span>
<span class="t" style="left:761.20px;top:219.00px;font-size:16.2px;color:#4e4e4e;transform:scaleX(0.9053);font-weight:bold;-webkit-text-stroke:0.3px #4e4e4e;">Gross Margin %</span>
<span class="t" style="left:903.00px;top:311.00px;font-size:12px;color:#8ed2b8;transform:scaleX(0.8229);-webkit-text-stroke:0.2px #8ed2b8;">53.2%</span>
<span class="t" style="left:881.32px;top:348.00px;font-size:11.3px;color:#6a6a6a;transform:scaleX(0.9500);-webkit-text-stroke:0.2px #6a6a6a;">0</span>
<span class="t" style="left:940.70px;top:348.00px;font-size:11.3px;color:#6a6a6a;transform:scaleX(0.9483);-webkit-text-stroke:0.2px #6a6a6a;">100</span>
<span class="t" style="left:887.80px;top:403.00px;font-size:14.3px;color:#5e6268;transform:scaleX(0.9707);font-weight:bold;-webkit-text-stroke:0.05px #5e6268;">Mar 2023</span>
<span class="t" style="left:1115.20px;top:219.00px;font-size:16.2px;color:#4e4e4e;transform:scaleX(0.9278);font-weight:bold;-webkit-text-stroke:0.3px #4e4e4e;">Net Product Revenue by Size</span>
<span class="t" style="left:1197.80px;top:260.00px;font-size:11.4px;color:#555;transform:scaleX(0.8893);-webkit-text-stroke:0.2px #555;">25 %</span>
<span class="t" style="left:1336.50px;top:287.00px;font-size:11.4px;color:#555;transform:scaleX(0.8739);-webkit-text-stroke:0.2px #555;">43 %</span>
<span class="t" style="left:1207.60px;top:346.00px;font-size:11.4px;color:#555;transform:scaleX(0.8585);-webkit-text-stroke:0.2px #555;">33 %</span>
<span class="t" style="left:1200.60px;top:372.00px;font-size:11.4px;color:#6a6a6a;transform:scaleX(0.9446);-webkit-text-stroke:0.2px #6a6a6a;">Small</span>
<span class="t" style="left:1259.50px;top:372.00px;font-size:11.4px;color:#6a6a6a;transform:scaleX(0.9730);-webkit-text-stroke:0.2px #6a6a6a;">Medium</span>
<span class="t" style="left:1331.10px;top:372.00px;font-size:11.4px;color:#6a6a6a;transform:scaleX(0.9223);-webkit-text-stroke:0.2px #6a6a6a;">Large</span>
<span class="t" style="left:1242.25px;top:403.00px;font-size:14.3px;color:#5e6268;transform:scaleX(0.9707);font-weight:bold;-webkit-text-stroke:0.05px #5e6268;">Mar 2023</span>
<span class="t" style="left:53.30px;top:455.00px;font-size:16.2px;color:#4e4e4e;transform:scaleX(0.9078);font-weight:bold;-webkit-text-stroke:0.3px #4e4e4e;">Production</span>
<span class="t" style="left:149.10px;top:498.00px;font-size:47px;color:#4a80b0;transform:scaleX(0.9251);font-weight:bold;-webkit-text-stroke:0.6px #4a80b0;">76.0 k</span>
<span class="t" style="left:167.00px;top:563.00px;font-size:12.2px;color:#2a2a2a;transform:scaleX(0.9062);-webkit-text-stroke:0.4px #2a2a2a;">-23.4 k</span>
<span class="t" style="left:214.80px;top:563.00px;font-size:12.2px;color:#2a2a2a;transform:scaleX(0.8595);-webkit-text-stroke:0.4px #2a2a2a;">-23.6 %</span>
<span class="t" style="left:178.90px;top:639.00px;font-size:14.3px;color:#5e6268;transform:scaleX(0.9707);font-weight:bold;-webkit-text-stroke:0.05px #5e6268;">Mar 2023</span>
<span class="t" style="left:407.30px;top:455.00px;font-size:16.2px;color:#4e4e4e;transform:scaleX(0.9184);font-weight:bold;-webkit-text-stroke:0.3px #4e4e4e;">Avg Win Size</span>
<span class="t" style="left:489.10px;top:505.00px;font-size:55px;color:#ea6a9f;transform:scaleX(0.9766);font-weight:bold;-webkit-text-stroke:0.6px #ea6a9f;">55.9 k</span>
<span class="t" style="left:533.35px;top:639.00px;font-size:14.3px;color:#5e6268;transform:scaleX(0.9707);font-weight:bold;-webkit-text-stroke:0.05px #5e6268;">Mar 2023</span>
<span class="t" style="left:761.00px;top:455.00px;font-size:16.2px;color:#4e4e4e;transform:scaleX(0.9260);font-weight:bold;-webkit-text-stroke:0.3px #4e4e4e;">Net Product Revenue Comparison</span>
<span class="t" style="left:809.10px;top:483.00px;font-size:11.6px;color:#666;transform:scaleX(0.8852);-webkit-text-stroke:0.2px #666;">20</span>
<span class="t" style="left:809.60px;top:520.00px;font-size:11.6px;color:#666;transform:scaleX(0.8463);-webkit-text-stroke:0.2px #666;">10</span>
<span class="t" style="left:815.10px;top:556.00px;font-size:11.6px;color:#666;transform:scaleX(0.8386);-webkit-text-stroke:0.2px #666;">0</span>
<span class="t" style="left:793.20px;top:547.45px;font-size:11.3px;color:#6a6a6a;transform-origin:0 0;transform:rotate(-90deg) scaleX(0.9248) translateY(-1.5px);">$,000,000</span>
<span class="t" style="right:623.05px;top:567px;font-size:11.6px;color:#666;transform-origin:100% 84.65%;transform:rotate(-20deg) scaleX(0.8904);">Jan 20...</span>
<span class="t" style="right:575.75px;top:567px;font-size:11.6px;color:#666;transform-origin:100% 84.65%;transform:rotate(-20deg) scaleX(0.8904);">Feb 20...</span>
<span class="t" style="right:528.45px;top:567px;font-size:11.6px;color:#666;transform-origin:100% 84.65%;transform:rotate(-20deg) scaleX(0.8904);">Mar 20...</span>
<span class="t" style="right:481.15px;top:567px;font-size:11.6px;color:#666;transform-origin:100% 84.65%;transform:rotate(-20deg) scaleX(0.8904);">Apr 202...</span>
<span class="t" style="right:433.85px;top:567px;font-size:11.6px;color:#666;transform-origin:100% 84.65%;transform:rotate(-20deg) scaleX(0.8904);">May 20...</span>
<span class="t" style="right:386.55px;top:567px;font-size:11.6px;color:#666;transform-origin:100% 84.65%;transform:rotate(-20deg) scaleX(0.8904);">Jun 20...</span>
<span class="t" style="right:339.25px;top:567px;font-size:11.6px;color:#666;transform-origin:100% 84.65%;transform:rotate(-20deg) scaleX(0.8904);">Jul 202...</span>
<span class="t" style="right:291.95px;top:567px;font-size:11.6px;color:#666;transform-origin:100% 84.65%;transform:rotate(-20deg) scaleX(0.8904);">Aug 20...</span>
<span class="t" style="right:244.65px;top:567px;font-size:11.6px;color:#666;transform-origin:100% 84.65%;transform:rotate(-20deg) scaleX(0.8904);">Sep 20...</span>
<span class="t" style="right:197.35px;top:567px;font-size:11.6px;color:#666;transform-origin:100% 84.65%;transform:rotate(-20deg) scaleX(0.8904);">Oct 202...</span>
<span class="t" style="right:150.05px;top:567px;font-size:11.6px;color:#666;transform-origin:100% 84.65%;transform:rotate(-20deg) scaleX(0.8904);">Nov 20...</span>
<span class="t" style="right:102.75px;top:567px;font-size:11.6px;color:#666;transform-origin:100% 84.65%;transform:rotate(-20deg) scaleX(0.8904);">Dec 20...</span>
<span class="t" style="left:944.40px;top:608.00px;font-size:11.4px;color:#6a6a6a;transform:scaleX(0.9342);-webkit-text-stroke:0.2px #6a6a6a;">Net Revenue(Act)</span>
<span class="t" style="left:1061.00px;top:608.00px;font-size:11.4px;color:#6a6a6a;transform:scaleX(0.9130);-webkit-text-stroke:0.2px #6a6a6a;">LY Net Revenue*</span>
<span class="t" style="left:1173.20px;top:608.00px;font-size:11.4px;color:#6a6a6a;transform:scaleX(0.9176);-webkit-text-stroke:0.2px #6a6a6a;">Net Revenue(Bud)</span>
<span class="t" style="left:1028.60px;top:639.00px;font-size:14.3px;color:#5e6268;transform:scaleX(0.9689);font-weight:bold;-webkit-text-stroke:0.05px #5e6268;">Jan 2023 - Dec 2023</span>
<span class="t" style="left:51.60px;top:690.00px;font-size:16.2px;color:#4e4e4e;transform:scaleX(0.9400);font-weight:bold;-webkit-text-stroke:0.3px #4e4e4e;">P&amp;L Scorecard w/ YTD</span>
<span class="t" style="left:450.33px;top:731.00px;font-size:11.7px;color:#484848;transform:scaleX(0.9300);-webkit-text-stroke:0.3px #484848;">YTD</span>
<span class="t" style="left:1067.16px;top:731.00px;font-size:11.7px;color:#484848;transform:scaleX(0.9300);-webkit-text-stroke:0.3px #484848;">PERIOD</span>
<span class="t" style="left:57.50px;top:759.00px;font-size:11.7px;color:#484848;transform:scaleX(0.8875);-webkit-text-stroke:0.3px #484848;">ACCOUNT</span>
<span class="t" style="left:258.63px;top:760.00px;font-size:11.7px;color:#484848;transform:scaleX(0.9300);-webkit-text-stroke:0.3px #484848;">2023 PTD</span>
<span class="t" style="left:285.86px;top:783.00px;font-size:11.7px;color:#484848;transform:scaleX(0.9300);-webkit-text-stroke:0.3px #484848;">ACT</span>
<span class="t" style="left:398.03px;top:760.00px;font-size:11.7px;color:#484848;transform:scaleX(0.9300);-webkit-text-stroke:0.3px #484848;">2023 PTD</span>
<span class="t" style="left:424.06px;top:783.00px;font-size:11.7px;color:#484848;transform:scaleX(0.9300);-webkit-text-stroke:0.3px #484848;">BUD</span>
<span class="t" style="left:562.00px;top:760.00px;font-size:11.7px;color:#484848;transform:scaleX(0.9300);-webkit-text-stroke:0.3px #484848;">2023</span>
<span class="t" style="left:531.41px;top:783.00px;font-size:11.7px;color:#484848;transform:scaleX(0.9300);-webkit-text-stroke:0.3px #484848;">VARIANCE</span>
<span class="t" style="left:701.10px;top:760.00px;font-size:11.7px;color:#484848;transform:scaleX(0.9300);-webkit-text-stroke:0.3px #484848;">2023</span>
<span class="t" style="left:691.05px;top:783.00px;font-size:11.7px;color:#484848;transform:scaleX(0.9300);-webkit-text-stroke:0.3px #484848;">VAR %</span>
<span class="t" style="left:813.13px;top:760.00px;font-size:11.7px;color:#484848;transform:scaleX(0.9300);-webkit-text-stroke:0.3px #484848;">MAR 2023</span>
<span class="t" style="left:842.76px;top:783.00px;font-size:11.7px;color:#484848;transform:scaleX(0.9300);-webkit-text-stroke:0.3px #484848;">ACT</span>
<span class="t" style="left:952.33px;top:760.00px;font-size:11.7px;color:#484848;transform:scaleX(0.9300);-webkit-text-stroke:0.3px #484848;">MAR 2023</span>
<span class="t" style="left:980.76px;top:783.00px;font-size:11.7px;color:#484848;transform:scaleX(0.9300);-webkit-text-stroke:0.3px #484848;">BUD</span>
<span class="t" style="left:1091.63px;top:760.00px;font-size:11.7px;color:#484848;transform:scaleX(0.9300);-webkit-text-stroke:0.3px #484848;">MAR 2023</span>
<span class="t" style="left:1088.21px;top:783.00px;font-size:11.7px;color:#484848;transform:scaleX(0.9300);-webkit-text-stroke:0.3px #484848;">VARIANCE</span>
<span class="t" style="left:1231.23px;top:760.00px;font-size:11.7px;color:#484848;transform:scaleX(0.9300);-webkit-text-stroke:0.3px #484848;">MAR 2023</span>
<span class="t" style="left:1248.35px;top:783.00px;font-size:11.7px;color:#484848;transform:scaleX(0.9300);-webkit-text-stroke:0.3px #484848;">VAR %</span>
<span class="t" style="left:1311.00px;top:760.00px;font-size:11.7px;color:#484848;transform:scaleX(0.9138);-webkit-text-stroke:0.3px #484848;">APR 2022 TO MAR 2...</span>
<span class="t" style="left:1345.53px;top:783.00px;font-size:11.7px;color:#484848;transform:scaleX(0.9300);-webkit-text-stroke:0.3px #484848;">MICRO CHART</span>
<span class="t" style="left:56.60px;top:813.00px;font-size:13.4px;color:#3a3a3a;transform:scaleX(0.8949);-webkit-text-stroke:0.3px #3a3a3a;">Revenue</span>
<span class="t" style="left:262.82px;top:813.00px;font-size:13.4px;color:#3a3a3a;transform:scaleX(0.9250);-webkit-text-stroke:0.3px #3a3a3a;">$34.9 M</span>
<span class="t" style="left:402.22px;top:813.00px;font-size:13.4px;color:#3a3a3a;transform:scaleX(0.9250);-webkit-text-stroke:0.3px #3a3a3a;">$32.8 M</span>
<span class="t" style="left:548.36px;top:813.00px;font-size:13.4px;color:#3a3a3a;transform:scaleX(0.9250);-webkit-text-stroke:0.3px #3a3a3a;">$2.2 M</span>
<span class="t" style="left:693.64px;top:813.00px;font-size:13.4px;color:#3a3a3a;transform:scaleX(0.9250);-webkit-text-stroke:0.3px #3a3a3a;">6.6 %</span>
<span class="t" style="left:819.72px;top:813.00px;font-size:13.4px;color:#3a3a3a;transform:scaleX(0.9250);-webkit-text-stroke:0.3px #3a3a3a;">$12.1 M</span>
<span class="t" style="left:959.85px;top:813.00px;font-size:13.4px;color:#3a3a3a;transform:scaleX(0.9250);-webkit-text-stroke:0.3px #3a3a3a;">$11.5 M</span>
<span class="t" style="left:1095.43px;top:813.00px;font-size:13.4px;color:#3a3a3a;transform:scaleX(0.9250);-webkit-text-stroke:0.3px #3a3a3a;">$607.8 k</span>
<span class="t" style="left:1250.94px;top:813.00px;font-size:13.4px;color:#3a3a3a;transform:scaleX(0.9250);-webkit-text-stroke:0.3px #3a3a3a;">5.3 %</span>
<span class="t" style="left:56.60px;top:842.00px;font-size:13.4px;color:#3a3a3a;transform:scaleX(0.8854);-webkit-text-stroke:0.3px #3a3a3a;">Revenue per FTE</span>
<span class="t" style="left:260.03px;top:842.00px;font-size:13.4px;color:#3a3a3a;transform:scaleX(0.9250);-webkit-text-stroke:0.3px #3a3a3a;">$252.8 k</span>
<span class="t" style="left:399.43px;top:842.00px;font-size:13.4px;color:#3a3a3a;transform:scaleX(0.9250);-webkit-text-stroke:0.3px #3a3a3a;">$232.6 k</span>
<span class="t" style="left:545.50px;top:842.00px;font-size:13.4px;color:#3a3a3a;transform:scaleX(0.9250);-webkit-text-stroke:0.3px #3a3a3a;">$20.1 k</span>
<span class="t" style="left:693.64px;top:842.00px;font-size:13.4px;color:#3a3a3a;transform:scaleX(0.9250);-webkit-text-stroke:0.3px #3a3a3a;">8.6 %</span>
<span class="t" style="left:823.80px;top:842.00px;font-size:13.4px;color:#3a3a3a;transform:scaleX(0.9250);-webkit-text-stroke:0.3px #3a3a3a;">$87.6 k</span>
<span class="t" style="left:963.00px;top:842.00px;font-size:13.4px;color:#3a3a3a;transform:scaleX(0.9250);-webkit-text-stroke:0.3px #3a3a3a;">$81.7 k</span>
<span class="t" style="left:1109.18px;top:842.00px;font-size:13.4px;color:#3a3a3a;transform:scaleX(0.9250);-webkit-text-stroke:0.3px #3a3a3a;">$5.9 k</span>
<span class="t" style="left:1250.94px;top:842.00px;font-size:13.4px;color:#3a3a3a;transform:scaleX(0.9250);-webkit-text-stroke:0.3px #3a3a3a;">7.3 %</span>
<span class="t" style="left:56.60px;top:869.00px;font-size:13.4px;color:#3a3a3a;transform:scaleX(0.9295);-webkit-text-stroke:0.3px #3a3a3a;">Cost of Sales</span>
<span class="t" style="left:262.82px;top:869.00px;font-size:13.4px;color:#3a3a3a;transform:scaleX(0.9250);-webkit-text-stroke:0.3px #3a3a3a;">$16.6 M</span>
<span class="t" style="left:402.22px;top:869.00px;font-size:13.4px;color:#3a3a3a;transform:scaleX(0.9250);-webkit-text-stroke:0.3px #3a3a3a;">$18.4 M</span>
<span class="t" style="left:544.20px;top:869.00px;font-size:13.4px;color:#3a3a3a;transform:scaleX(0.9250);-webkit-text-stroke:0.3px #3a3a3a;">-$1.8 M</span>
<span class="t" style="left:689.50px;top:869.00px;font-size:13.4px;color:#3a3a3a;transform:scaleX(0.9250);-webkit-text-stroke:0.3px #3a3a3a;">-9.7 %</span>
<span class="t" style="left:826.66px;top:869.00px;font-size:13.4px;color:#3a3a3a;transform:scaleX(0.9250);-webkit-text-stroke:0.3px #3a3a3a;">$5.7 M</span>
<span class="t" style="left:965.86px;top:869.00px;font-size:13.4px;color:#3a3a3a;transform:scaleX(0.9250);-webkit-text-stroke:0.3px #3a3a3a;">$6.5 M</span>
<span class="t" style="left:1091.28px;top:869.00px;font-size:13.4px;color:#3a3a3a;transform:scaleX(0.9250);-webkit-text-stroke:0.3px #3a3a3a;">-$852.8 k</span>
<span class="t" style="left:1239.92px;top:869.00px;font-size:13.4px;color:#3a3a3a;transform:scaleX(0.9250);-webkit-text-stroke:0.3px #3a3a3a;">-13.0 %</span>
<span class="t" style="left:56.60px;top:896.00px;font-size:13.4px;color:#3a3a3a;transform:scaleX(0.9334);-webkit-text-stroke:0.3px #3a3a3a;">Gross Margin</span>
<span class="t" style="left:262.82px;top:896.00px;font-size:13.4px;color:#3a3a3a;transform:scaleX(0.9250);-webkit-text-stroke:0.3px #3a3a3a;">$18.3 M</span>
<span class="t" style="left:402.22px;top:896.00px;font-size:13.4px;color:#3a3a3a;transform:scaleX(0.9250);-webkit-text-stroke:0.3px #3a3a3a;">$14.4 M</span>
<span class="t" style="left:548.36px;top:896.00px;font-size:13.4px;color:#3a3a3a;transform:scaleX(0.9250);-webkit-text-stroke:0.3px #3a3a3a;">$4.0 M</span>
<span class="t" style="left:686.70px;top:896.00px;font-size:13.4px;color:#3a3a3a;transform:scaleX(0.9250);-webkit-text-stroke:0.3px #3a3a3a;">27.5 %</span>
<span class="t" style="left:826.66px;top:896.00px;font-size:13.4px;color:#3a3a3a;transform:scaleX(0.9250);-webkit-text-stroke:0.3px #3a3a3a;">$6.4 M</span>
<span class="t" style="left:965.86px;top:896.00px;font-size:13.4px;color:#3a3a3a;transform:scaleX(0.9250);-webkit-text-stroke:0.3px #3a3a3a;">$5.0 M</span>
<span class="t" style="left:1105.16px;top:896.00px;font-size:13.4px;color:#3a3a3a;transform:scaleX(0.9250);-webkit-text-stroke:0.3px #3a3a3a;">$1.5 M</span>
<span class="t" style="left:1244.00px;top:896.00px;font-size:13.4px;color:#3a3a3a;transform:scaleX(0.9250);-webkit-text-stroke:0.3px #3a3a3a;">29.4 %</span>
<div class="b" style="left:32px;top:903px;width:1416px;height:24px;background:#fff;border-top:1px solid #ebebeb;"></div>
<span class="t" style="left:47.70px;top:910.00px;font-size:12.2px;color:#8c8c8c;transform:scaleX(0.9438);-webkit-text-stroke:0.2px #8c8c8c;">© 2022 Workday, Inc. All rights reserved. Proprietary and Confidential</span>
<span class="t" style="left:427.00px;top:910.00px;font-size:12.2px;color:#588de0;transform:scaleX(0.9358);-webkit-text-stroke:0.2px #588de0;">Privacy Policy</span>
<div class="b" style="left:413px;top:908px;width:1px;height:16px;background:#dcdcdc;"></div>
</div></div>
</body></html>
